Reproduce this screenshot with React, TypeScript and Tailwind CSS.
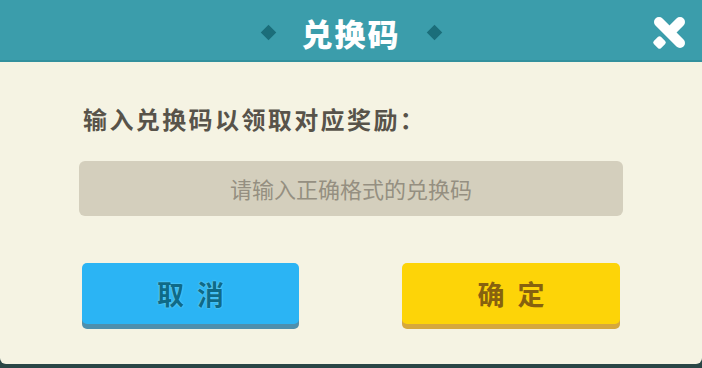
import React from "react";

const cjk = { fontFamily: '"Noto Sans CJK SC", "Noto Sans", sans-serif' };

function Diamond() {
  return <div className="w-[11px] h-[11px] rotate-45 bg-[#1b6e7a]" />;
}

function CloseIcon() {
  return (
    <svg width="40" height="40" viewBox="0 0 40 40">
      <line x1="10" y1="10" x2="31" y2="31" stroke="#ffffff" strokeWidth="10" strokeLinecap="round" />
      <line x1="31" y1="10" x2="21" y2="20" stroke="#ffffff" strokeWidth="10" strokeLinecap="round" />
      <rect x="5.5" y="25.5" width="10" height="10" rx="2" transform="rotate(45 10.5 30.5)" fill="#ffffff" />
    </svg>
  );
}

export default function App() {
  return (
    <div className="w-[702px] h-[368px] bg-[#2a4646] flex flex-col" style={cjk}>
      <div className="h-[62px] shrink-0 bg-[#3b9dab] border-b-2 border-[#32909d] flex items-center justify-center relative pt-[4px]">
        <div className="flex items-center gap-[28px]">
          <Diamond />
          <span className="text-[31px] font-black text-white tracking-[2px] leading-none">兑换码</span>
          <Diamond />
        </div>
        <div className="absolute right-[13px] top-[12px]">
          <CloseIcon />
        </div>
      </div>
      <div className="flex-1 bg-[#f5f3e3] rounded-b-[6px] pl-[79px] flex flex-col">
        <div className="mt-[41px] ml-[4px] text-[24px] leading-[32px] font-bold text-[#58534a] tracking-[2.4px]">
          输入兑换码以领取对应奖励：
        </div>
        <div className="mt-[26px] w-[544px] h-[55px] rounded-[6px] bg-[#d4cfbd] flex items-center justify-center text-[22px] text-[#958f81]">
          请输入正确格式的兑换码
        </div>
        <div className="mt-[47px] flex">
          <div className="ml-[3px] w-[217px] h-[61px] rounded-[5px] bg-[#2bb4f4] shadow-[0_5px_0_#4d8fad] flex items-center justify-center">
            <span
              className="text-[27px] font-bold text-[#0e6a88] tracking-[13px] -mr-[13px] leading-none"
              style={{ textShadow: "0 0 2px #6fd6f8, 0 0 1px #6fd6f8" }}
            >
              取消
            </span>
          </div>
          <div className="ml-[103px] w-[218px] h-[61px] rounded-[5px] bg-[#fdd408] shadow-[0_5px_0_#d6a83c] flex items-center justify-center">
            <span className="text-[27px] font-bold text-[#87610f] tracking-[13px] -mr-[13px] leading-none">确定</span>
          </div>
        </div>
      </div>
      <div className="h-[4px] shrink-0" />
    </div>
  );
}
